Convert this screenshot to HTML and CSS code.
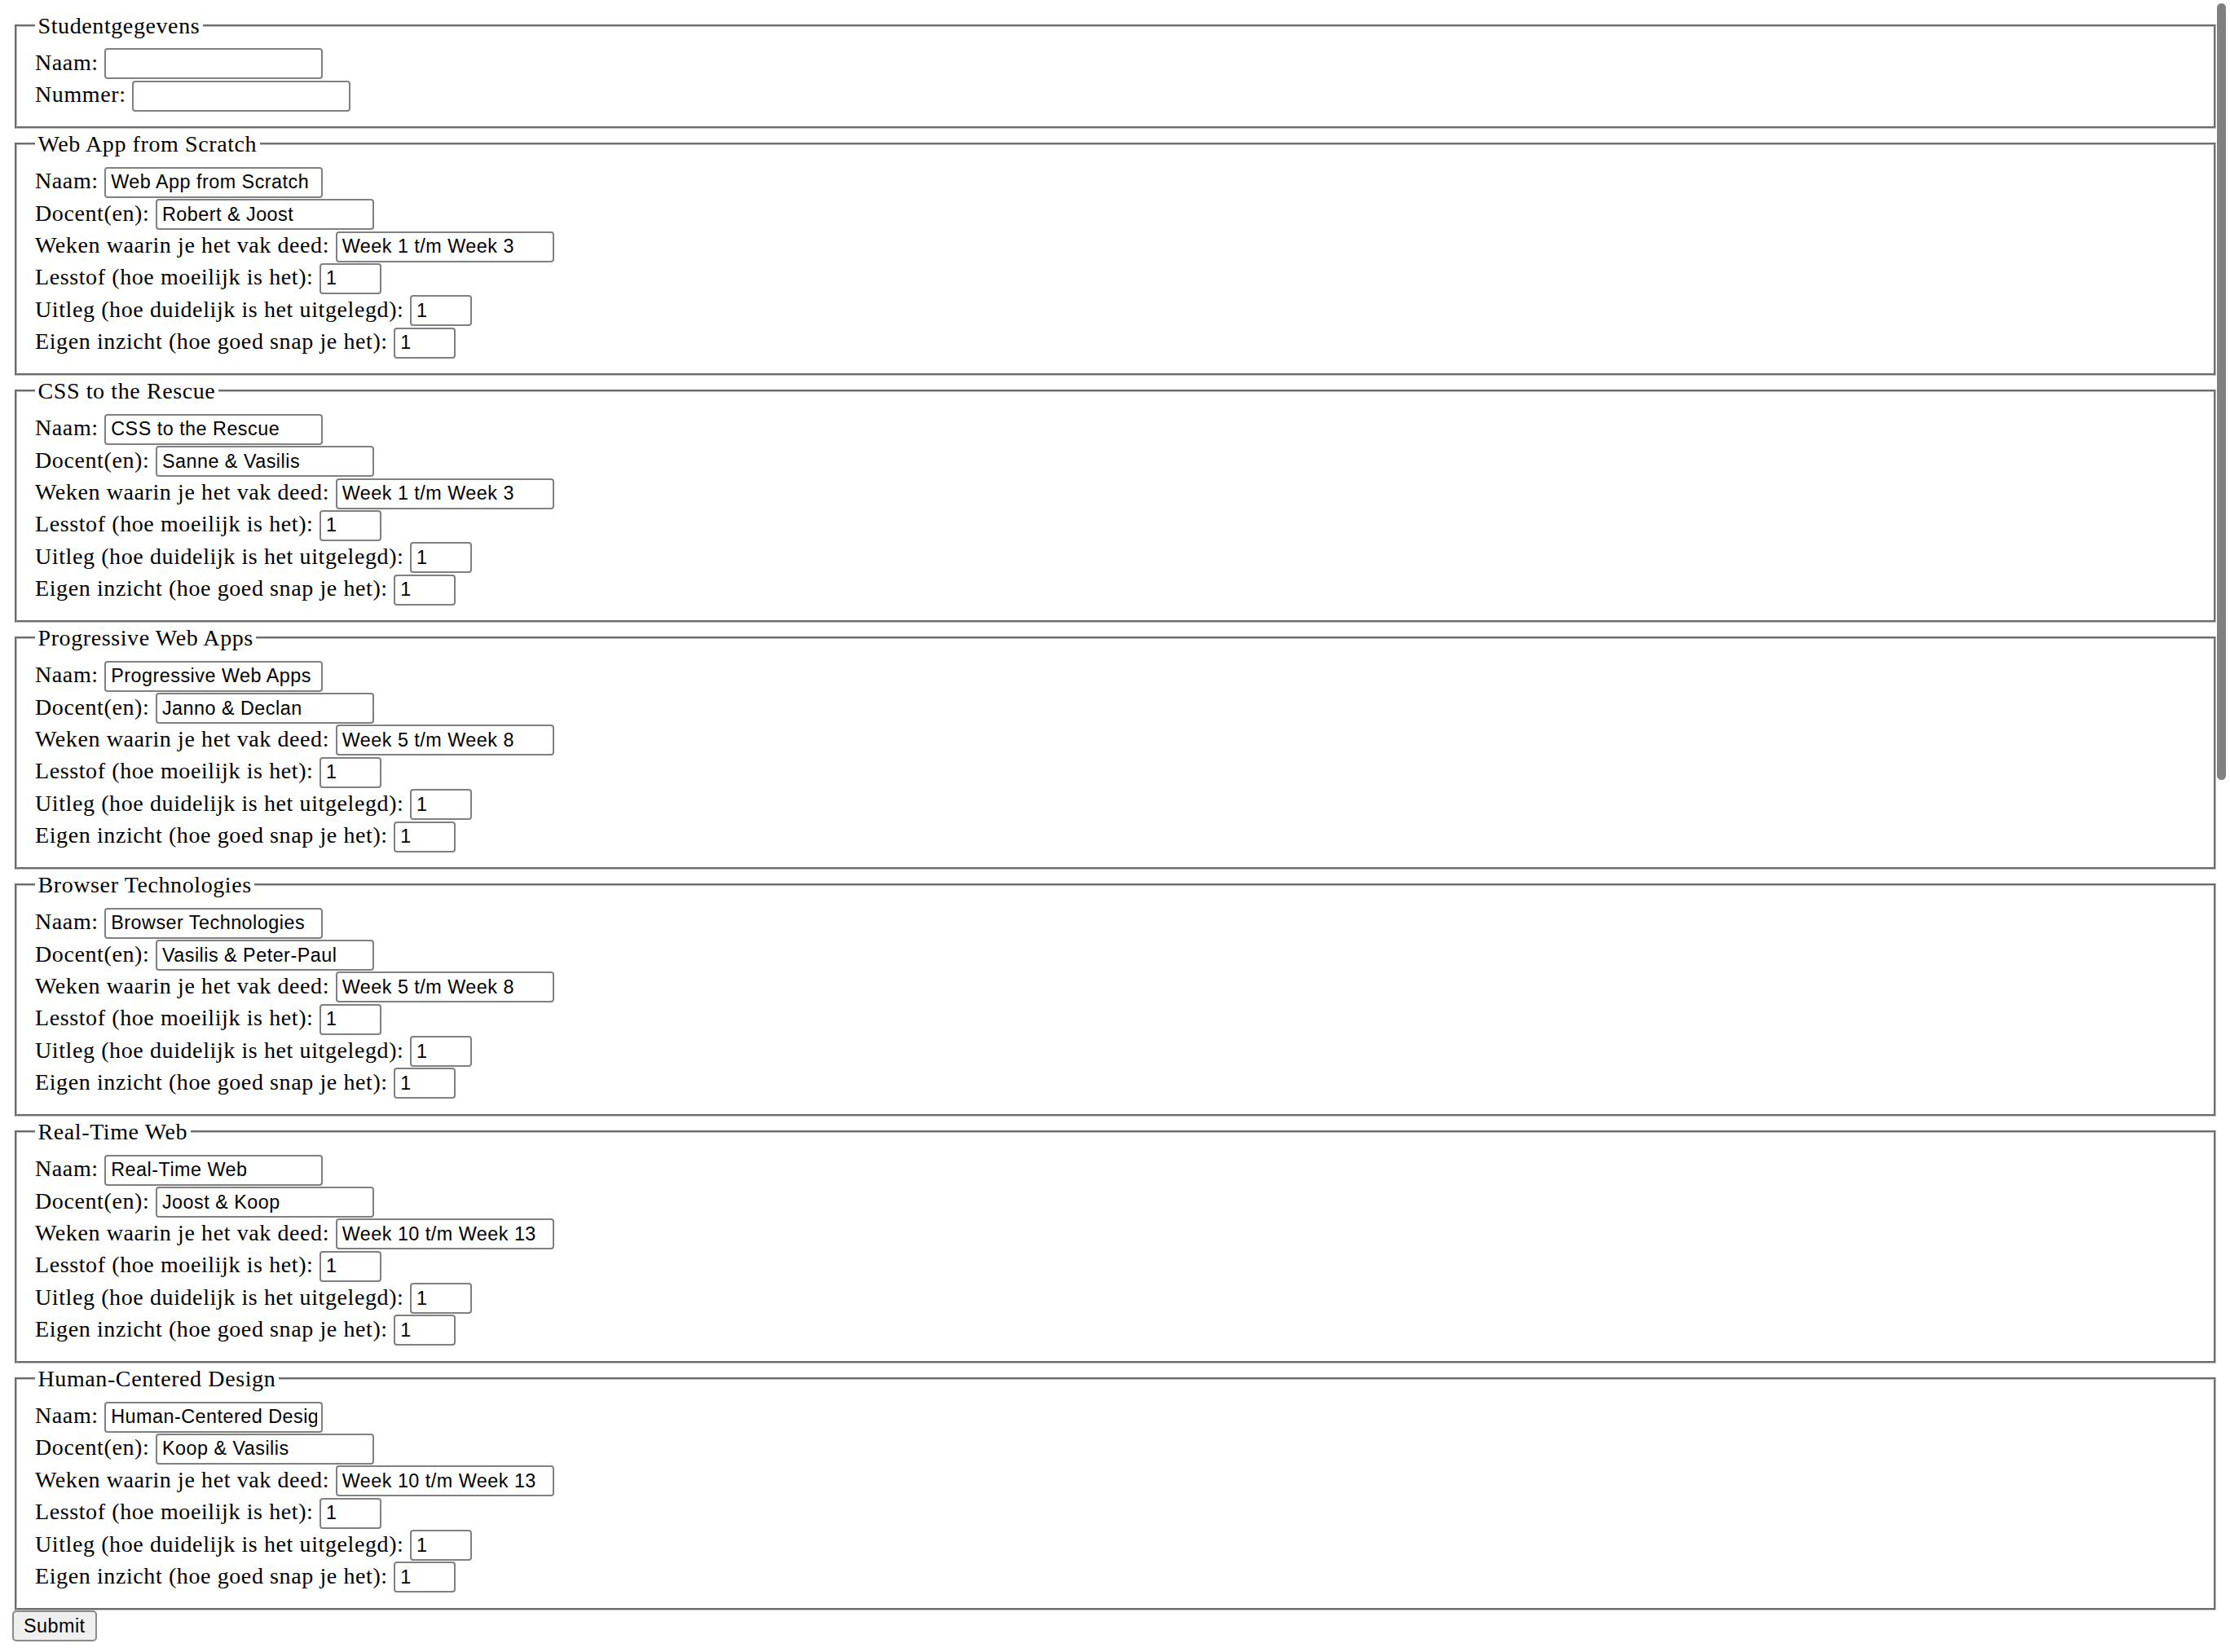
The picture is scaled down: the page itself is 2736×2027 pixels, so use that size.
FILE: index.html
```html
<!DOCTYPE html>
<html lang="nl">
<head>
<meta charset="utf-8">
<title>Enquête</title>
<link rel="stylesheet" href="styles.css">
</head>
<body>
<form class="survey">
  <fieldset class="group">
    <legend class="group-title">Studentgegevens</legend>
    <div class="row"><label>Naam: <input class="field text" type="text"></label></div>
    <div class="row"><label>Nummer: <input class="field text" type="text"></label></div>
  </fieldset>

  <fieldset class="group">
    <legend class="group-title">Web App from Scratch</legend>
    <div class="row"><label>Naam: <input class="field text" type="text" value="Web App from Scratch"></label></div>
    <div class="row"><label>Docent(en): <input class="field text" type="text" value="Robert &amp; Joost"></label></div>
    <div class="row"><label>Weken waarin je het vak deed: <input class="field text" type="text" value="Week 1 t/m Week 3"></label></div>
    <div class="row"><label>Lesstof (hoe moeilijk is het): <input class="field num" type="number" value="1"></label></div>
    <div class="row"><label>Uitleg (hoe duidelijk is het uitgelegd): <input class="field num" type="number" value="1"></label></div>
    <div class="row"><label>Eigen inzicht (hoe goed snap je het): <input class="field num" type="number" value="1"></label></div>
  </fieldset>

  <fieldset class="group">
    <legend class="group-title">CSS to the Rescue</legend>
    <div class="row"><label>Naam: <input class="field text" type="text" value="CSS to the Rescue"></label></div>
    <div class="row"><label>Docent(en): <input class="field text" type="text" value="Sanne &amp; Vasilis"></label></div>
    <div class="row"><label>Weken waarin je het vak deed: <input class="field text" type="text" value="Week 1 t/m Week 3"></label></div>
    <div class="row"><label>Lesstof (hoe moeilijk is het): <input class="field num" type="number" value="1"></label></div>
    <div class="row"><label>Uitleg (hoe duidelijk is het uitgelegd): <input class="field num" type="number" value="1"></label></div>
    <div class="row"><label>Eigen inzicht (hoe goed snap je het): <input class="field num" type="number" value="1"></label></div>
  </fieldset>

  <fieldset class="group">
    <legend class="group-title">Progressive Web Apps</legend>
    <div class="row"><label>Naam: <input class="field text" type="text" value="Progressive Web Apps"></label></div>
    <div class="row"><label>Docent(en): <input class="field text" type="text" value="Janno &amp; Declan"></label></div>
    <div class="row"><label>Weken waarin je het vak deed: <input class="field text" type="text" value="Week 5 t/m Week 8"></label></div>
    <div class="row"><label>Lesstof (hoe moeilijk is het): <input class="field num" type="number" value="1"></label></div>
    <div class="row"><label>Uitleg (hoe duidelijk is het uitgelegd): <input class="field num" type="number" value="1"></label></div>
    <div class="row"><label>Eigen inzicht (hoe goed snap je het): <input class="field num" type="number" value="1"></label></div>
  </fieldset>

  <fieldset class="group">
    <legend class="group-title">Browser Technologies</legend>
    <div class="row"><label>Naam: <input class="field text" type="text" value="Browser Technologies"></label></div>
    <div class="row"><label>Docent(en): <input class="field text" type="text" value="Vasilis &amp; Peter-Paul"></label></div>
    <div class="row"><label>Weken waarin je het vak deed: <input class="field text" type="text" value="Week 5 t/m Week 8"></label></div>
    <div class="row"><label>Lesstof (hoe moeilijk is het): <input class="field num" type="number" value="1"></label></div>
    <div class="row"><label>Uitleg (hoe duidelijk is het uitgelegd): <input class="field num" type="number" value="1"></label></div>
    <div class="row"><label>Eigen inzicht (hoe goed snap je het): <input class="field num" type="number" value="1"></label></div>
  </fieldset>

  <fieldset class="group">
    <legend class="group-title">Real-Time Web</legend>
    <div class="row"><label>Naam: <input class="field text" type="text" value="Real-Time Web"></label></div>
    <div class="row"><label>Docent(en): <input class="field text" type="text" value="Joost &amp; Koop"></label></div>
    <div class="row"><label>Weken waarin je het vak deed: <input class="field text" type="text" value="Week 10 t/m Week 13"></label></div>
    <div class="row"><label>Lesstof (hoe moeilijk is het): <input class="field num" type="number" value="1"></label></div>
    <div class="row"><label>Uitleg (hoe duidelijk is het uitgelegd): <input class="field num" type="number" value="1"></label></div>
    <div class="row"><label>Eigen inzicht (hoe goed snap je het): <input class="field num" type="number" value="1"></label></div>
  </fieldset>

  <fieldset class="group">
    <legend class="group-title">Human-Centered Design</legend>
    <div class="row"><label>Naam: <input class="field text" type="text" value="Human-Centered Design"></label></div>
    <div class="row"><label>Docent(en): <input class="field text" type="text" value="Koop &amp; Vasilis"></label></div>
    <div class="row"><label>Weken waarin je het vak deed: <input class="field text" type="text" value="Week 10 t/m Week 13"></label></div>
    <div class="row"><label>Lesstof (hoe moeilijk is het): <input class="field num" type="number" value="1"></label></div>
    <div class="row"><label>Uitleg (hoe duidelijk is het uitgelegd): <input class="field num" type="number" value="1"></label></div>
    <div class="row"><label>Eigen inzicht (hoe goed snap je het): <input class="field num" type="number" value="1"></label></div>
  </fieldset>
  <input class="submit" type="submit" value="Submit">
</form>
<div class="scroll-thumb" aria-hidden="true"></div>
</body>
</html>
```

FILE: styles.css
```css
html {
  background: #ffffff;
}

body {
  margin: 12.5px 14px 0;
  font-family: "Liberation Serif", "Times New Roman", serif;
  font-size: 28px;
  line-height: normal;
  letter-spacing: 0.6px;
  color: #000000;
}

.survey {
  margin: 0;
}

.group {
  margin: 0 3.5px;
  padding: 9.8px 22.5px 17.1px;
  border: 3px groove #c0c0c0;
  min-inline-size: min-content;
}

.group-title {
  padding: 0 3.5px;
  line-height: 37px;
}

.row {
  height: 39.35px;
}

.field {
  -webkit-appearance: none;
  appearance: none;
  box-sizing: border-box;
  height: 38px;
  margin: 0;
  padding: 0 5px 0 6px;
  border: 2px solid #808080;
  border-radius: 4px;
  background: #ffffff;
  color: #000000;
  font-family: "Liberation Sans", Arial, sans-serif;
  font-size: 23.33px;
  letter-spacing: 0.5px;
  line-height: normal;
  vertical-align: baseline;
}

.text {
  width: 268px;
}

.num {
  width: 75.5px;
}

.num::-webkit-inner-spin-button,
.num::-webkit-outer-spin-button {
  -webkit-appearance: none;
  margin: 0;
}

.submit {
  -webkit-appearance: none;
  appearance: none;
  box-sizing: border-box;
  height: 38.5px;
  margin: 0 0 0 1px;
  padding: 0 12px;
  border: 2px solid #8a8a8a;
  border-radius: 5px;
  background: #efefef;
  color: #000000;
  font-family: "Liberation Sans", Arial, sans-serif;
  font-size: 23.33px;
  letter-spacing: 0.5px;
  line-height: normal;
}

.scroll-thumb {
  position: fixed;
  top: 4px;
  right: 5px;
  width: 11.5px;
  height: 953px;
  border-radius: 6px;
  background: #808080;
}
```
